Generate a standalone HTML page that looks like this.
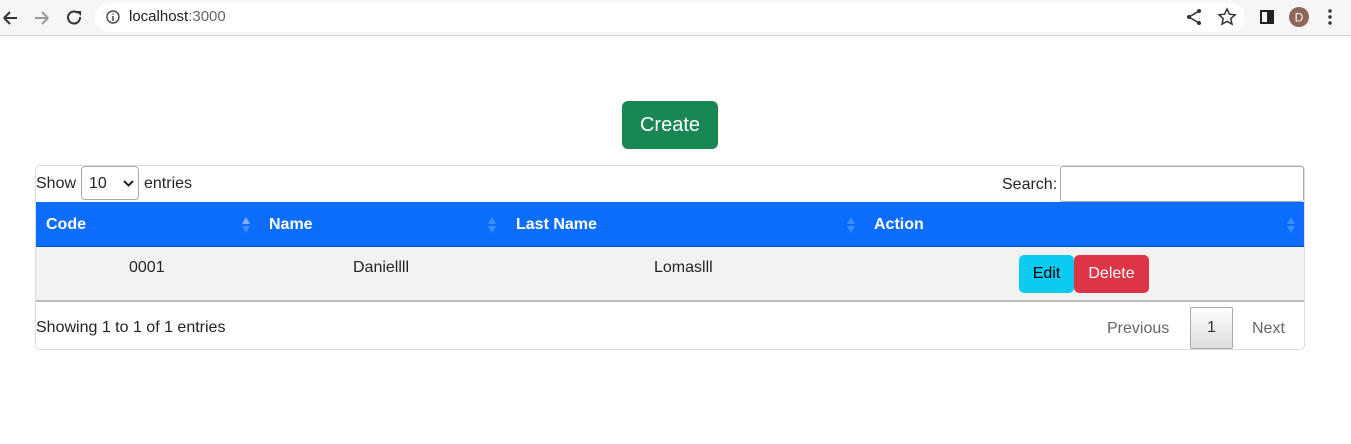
<!DOCTYPE html>
<html><head><style>
*{box-sizing:border-box;margin:0;padding:0}
body{width:1351px;height:444px;background:#fff;font-family:"Liberation Sans",sans-serif;color:#212529;position:relative;overflow:hidden}
.abs{position:absolute}
.bar{left:0;top:0;width:1351px;height:36px;background:#f6f6f6;border-bottom:1px solid #d9d4cf}
.omni{left:95px;top:3px;width:1150px;height:29px;background:#fff;border-radius:15px}
.t{font-size:16px;white-space:nowrap}
</style></head><body>
<div class="abs bar"></div>
<div class="abs omni"></div>
<svg class="abs" style="left:0;top:8px" width="90" height="20">
<path d="M4 10h13M4 10l6-6M4 10l6 6" stroke="#333" stroke-width="2" fill="none"/>
<path d="M35 10h13M48 10l-6-6M48 10l-6 6" stroke="#999" stroke-width="2" fill="none"/>
<path d="M78 5a6 6 0 1 0 2 4" stroke="#333" stroke-width="2" fill="none"/><path d="M76 3h5v5z" fill="#333"/>
</svg>
<svg class="abs" style="left:105px;top:9px" width="16" height="16"><circle cx="8" cy="8" r="6" stroke="#444" stroke-width="1.4" fill="none"/><path d="M8 7v5M8 4.5v1" stroke="#444" stroke-width="1.5"/></svg>
<div class="abs t" style="left:129px;top:8px;font-size:15px;color:#202124">localhost<span style="color:#666">:3000</span></div>
<svg class="abs" style="left:1185px;top:7px" width="160" height="20">
<circle cx="14" cy="4" r="2" fill="#333"/><circle cx="14" cy="16" r="2" fill="#333"/><circle cx="4" cy="10" r="2" fill="#333"/><path d="M14 4L4 10l10 6" stroke="#333" stroke-width="1.6" fill="none"/>
<path d="M42 2l2.4 5.2 5.6.6-4.2 3.8 1.2 5.6L42 14.4 37 17.2l1.2-5.6L34 7.8l5.6-.6z" stroke="#333" stroke-width="1.5" fill="none"/>
<rect x="76" y="4" width="12" height="12" stroke="#222" stroke-width="2" fill="none"/><rect x="82" y="4" width="6" height="12" fill="#222"/>
<circle cx="114" cy="10" r="10" fill="#8d6658"/><text x="114" y="14.5" font-size="12" fill="#fff" text-anchor="middle" font-family="Liberation Sans">D</text>
<circle cx="145" cy="4" r="1.7" fill="#333"/><circle cx="145" cy="10" r="1.7" fill="#333"/><circle cx="145" cy="16" r="1.7" fill="#333"/>
</svg>
<div class="abs t" style="left:622px;top:101px;width:96px;height:48px;background:#198754;border-radius:6px;color:#fff;font-size:20px;line-height:48px;text-align:center">Create</div>
<div class="abs" style="left:35px;top:165px;width:1270px;height:185px;border:1px solid #ddd;border-radius:5px"></div>
<div class="abs t" style="left:36px;top:175px">Show</div>
<div class="abs" style="left:81px;top:166px;width:58px;height:34px;border:1px solid #aaa;border-radius:4px"></div>
<div class="abs t" style="left:89px;top:175px">10</div>
<svg class="abs" style="left:123px;top:180px" width="12" height="8"><path d="M1 1l4.5 4.5L10 1" stroke="#222" stroke-width="2" fill="none"/></svg>
<div class="abs t" style="left:144px;top:175px">entries</div>
<div class="abs t" style="left:1002px;top:176px">Search:</div>
<div class="abs" style="left:1060px;top:166px;width:244px;height:36px;border:1px solid #aaa;border-radius:3px"></div>
<div class="abs" style="left:36px;top:202px;width:1268px;height:45px;background:#0d6efd;border-bottom:1px solid #0a53be"></div>
<div class="abs t" style="left:46px;top:216px;color:#fff;font-weight:bold">Code</div>
<div class="abs t" style="left:269px;top:216px;color:#fff;font-weight:bold">Name</div>
<div class="abs t" style="left:516px;top:216px;color:#fff;font-weight:bold">Last Name</div>
<div class="abs t" style="left:874px;top:216px;color:#fff;font-weight:bold">Action</div>
<svg class="abs" style="left:0;top:216px" width="1351" height="20">
<path d="M242 8l4-7 4 7z" fill="#7fb0ff"/><path d="M242 10l4 7 4-7z" fill="#3d8bfd"/>
<path d="M488 8l4-7 4 7zM488 10l4 7 4-7z" fill="#3d8bfd"/>
<path d="M847 8l4-7 4 7zM847 10l4 7 4-7z" fill="#3d8bfd"/>
<path d="M1287 8l4-7 4 7zM1287 10l4 7 4-7z" fill="#3d8bfd"/>
</svg>
<div class="abs" style="left:36px;top:247px;width:1268px;height:55px;background:#f2f2f2;border-bottom:2px solid #bbb"></div>
<div class="abs t" style="left:129px;top:259px">0001</div>
<div class="abs t" style="left:353px;top:259px">Daniellll</div>
<div class="abs t" style="left:654px;top:259px">Lomaslll</div>
<div class="abs t" style="left:1019px;top:255px;width:55px;height:38px;background:#0dcaf0;border-radius:5px;line-height:38px;text-align:center;color:#000">Edit</div>
<div class="abs t" style="left:1074px;top:255px;width:75px;height:38px;background:#dc3545;border-radius:5px;line-height:38px;text-align:center;color:#fff">Delete</div>
<div class="abs t" style="left:36px;top:319px">Showing 1 to 1 of 1 entries</div>
<div class="abs t" style="left:1107px;top:320px;color:#666">Previous</div>
<div class="abs t" style="left:1190px;top:307px;width:43px;height:42px;border:1px solid #aaa;border-radius:2px;background:linear-gradient(#fff,#ddd);line-height:40px;text-align:center;color:#333">1</div>
<div class="abs t" style="left:1252px;top:320px;color:#666">Next</div>
</body></html>
